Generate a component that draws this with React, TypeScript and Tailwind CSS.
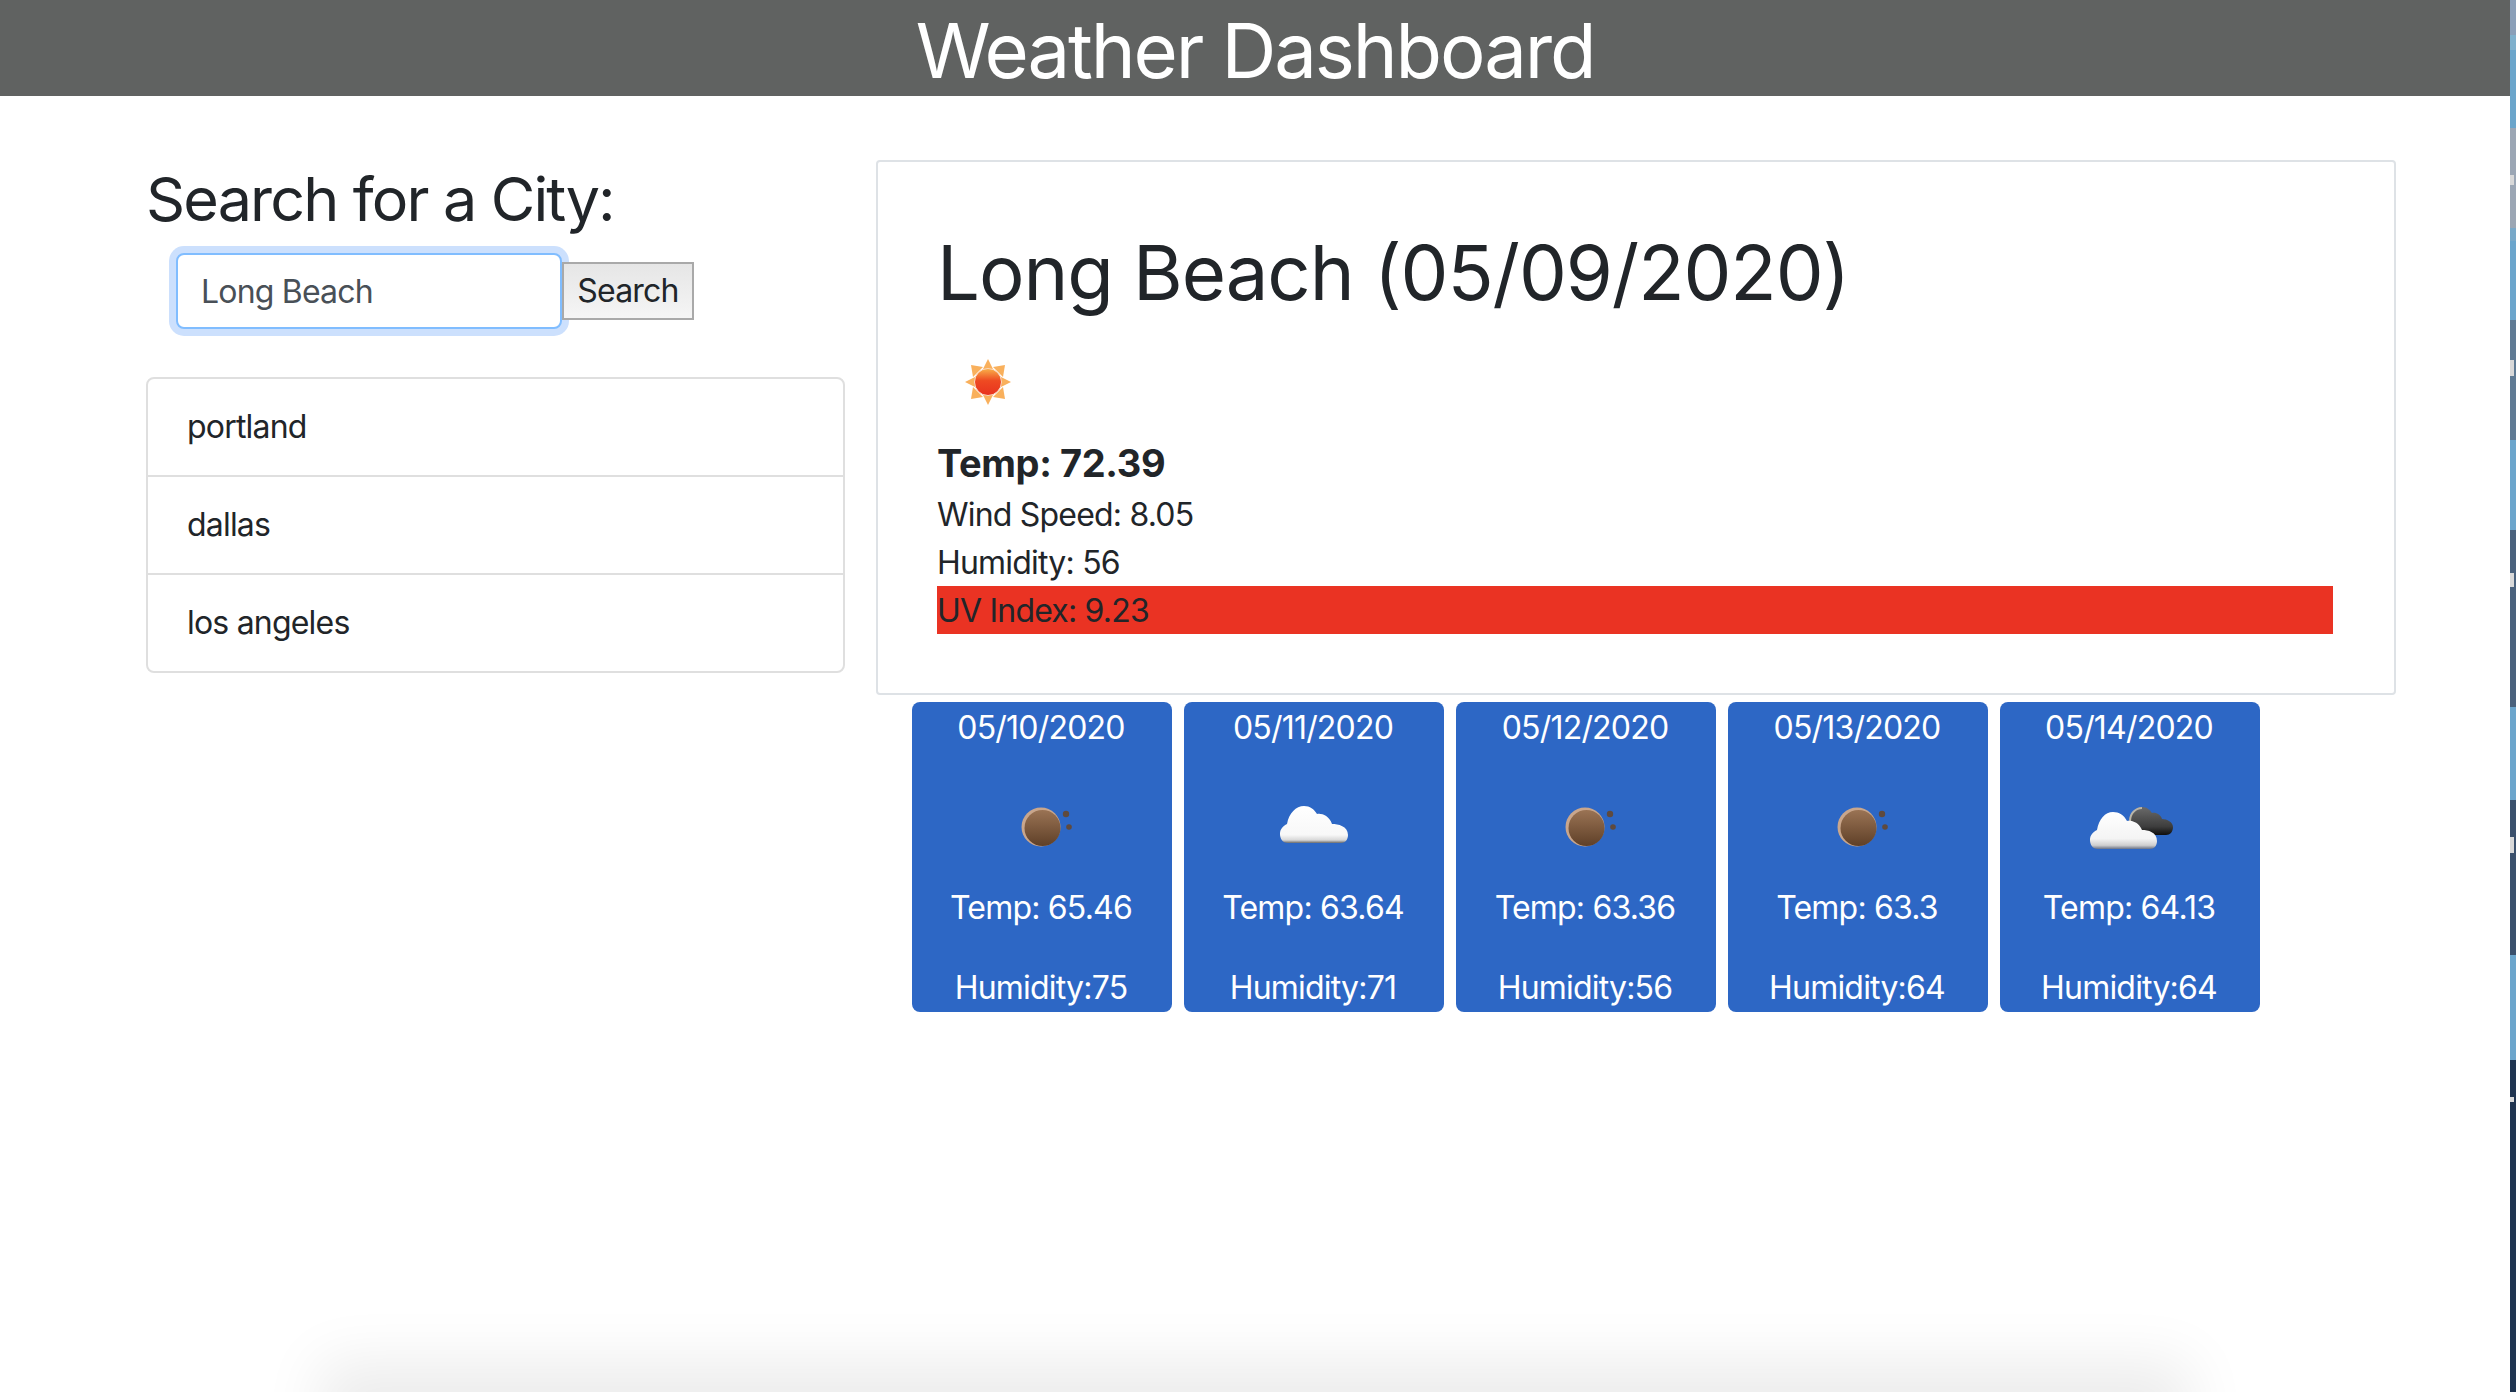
import { useId } from "react";

const forecast = [
	{ date: "05/10/2020", temp: "65.46", humidity: "75", icon: "haze" },
	{ date: "05/11/2020", temp: "63.64", humidity: "71", icon: "cloud" },
	{ date: "05/12/2020", temp: "63.36", humidity: "56", icon: "haze" },
	{ date: "05/13/2020", temp: "63.3", humidity: "64", icon: "haze" },
	{ date: "05/14/2020", temp: "64.13", humidity: "64", icon: "clouds" },
];

const cities = ["portland", "dallas", "los angeles"];

// sliver of the desktop wallpaper visible right of the browser window
const stripe = [
	{ h: "h-[35px]", bg: "bg-[#8a9fb8]", mark: "" },
	{ h: "h-[15px]", bg: "bg-[#7fb0cc]", mark: "" },
	{ h: "h-[78px]", bg: "bg-[#6aa5cb]", mark: "" },
	{ h: "h-[100px]", bg: "bg-[#9ba6b4]", mark: "mt-[47px] h-[10px] w-[4px] bg-[#d8d8d8]" },
	{ h: "h-[13px]", bg: "bg-[#78a8c8]", mark: "" },
	{ h: "h-[79px]", bg: "bg-[#6ba5cc]", mark: "" },
	{ h: "h-[120px]", bg: "bg-[#5f7a93]", mark: "mt-[40px] h-[16px] w-[4px] bg-[#d8d8d8]" },
	{ h: "h-[90px]", bg: "bg-[#6ba5cc]", mark: "" },
	{ h: "h-[177px]", bg: "bg-[#4a617c]", mark: "mt-[43px] h-[14px] w-[4px] bg-[#d8d8d8]" },
	{ h: "h-[93px]", bg: "bg-[#6ba5cc]", mark: "" },
	{ h: "h-[155px]", bg: "bg-[#3a506c]", mark: "mt-[37px] h-[16px] w-[4px] bg-[#d8d8d8]" },
	{ h: "h-[105px]", bg: "bg-[#6ba5cc]", mark: "" },
	{ h: "h-[332px]", bg: "bg-[#1f3450]", mark: "mt-[37px] h-[5px] w-[4px] bg-[#d8d8d8]" },
];

const SunIcon = () => {
	const id = useId();
	return (
		<svg width="100" height="100" viewBox="0 0 100 100" className="blur-[0.5px]">
			<defs>
				<linearGradient id={id} x1="0" y1="0" x2="0" y2="1">
					<stop offset="0" stopColor="#f9b24a" />
					<stop offset="0.45" stopColor="#ee4a22" />
					<stop offset="1" stopColor="#e8321f" />
				</linearGradient>
			</defs>
			<g fill="#f9b05c">
				<path d="M50 27l-5 10h10z" />
				<path d="M50 73l-5-10h10z" />
				<path d="M27 50l10-5v10z" />
				<path d="M73 50l-10-5v10z" />
				<path d="M33 33l12 2-10 10z" />
				<path d="M67 33l-12 2 10 10z" />
				<path d="M33 67l12-2-10-10z" />
				<path d="M67 67l-12-2 10-10z" />
			</g>
			<circle cx="50" cy="50" r="13.5" fill={`url(#${id})`} stroke="#fbd9c0" strokeWidth="1" />
		</svg>
	);
};

const HazeIcon = () => {
	const id = useId();
	return (
		<svg width="100" height="100" viewBox="0 0 100 100" className="blur-[0.4px]">
			<defs>
				<linearGradient id={id} x1="0" y1="0" x2="0" y2="1">
					<stop offset="0" stopColor="#9a7354" />
					<stop offset="1" stopColor="#5f4028" />
				</linearGradient>
			</defs>
			<circle cx="49" cy="50" r="19.5" fill="#c9a68c" />
			<circle cx="50.5" cy="51" r="18" fill={`url(#${id})`} />
			<circle cx="74" cy="37" r="3.2" fill="#5f4a3e" />
			<circle cx="77" cy="50" r="2.8" fill="#5f4a3e" />
		</svg>
	);
};

const CloudIcon = () => {
	const id = useId();
	return (
		<svg width="100" height="100" viewBox="0 0 100 100" className="blur-[0.5px]">
			<defs>
				<linearGradient id={id} x1="0" y1="0" x2="0" y2="1">
					<stop offset="0" stopColor="#ffffff" />
					<stop offset="0.78" stopColor="#f8f8f8" />
					<stop offset="0.92" stopColor="#d8d8d8" />
					<stop offset="1" stopColor="#6b6b6b" />
				</linearGradient>
			</defs>
			<path
				d="M24 66C18 66 16 61 16 57C16 52 19 49 23 47C25 36 32 29 40 29C46 29 50 32 53 37C57 36 65 38 68 47C74 47 84 49 84 58C84 63 81 66 77 66Z"
				fill={`url(#${id})`}
			/>
		</svg>
	);
};

const CloudsIcon = () => {
	const white = useId();
	const dark = useId();
	return (
		<svg width="100" height="100" viewBox="0 0 100 100" className="blur-[0.5px]">
			<defs>
				<linearGradient id={white} x1="0" y1="0" x2="0" y2="1">
					<stop offset="0" stopColor="#ffffff" />
					<stop offset="0.72" stopColor="#f4f4f4" />
					<stop offset="0.9" stopColor="#cfcfcf" />
					<stop offset="1" stopColor="#6a7285" />
				</linearGradient>
				<linearGradient id={dark} x1="0" y1="0" x2="0" y2="1">
					<stop offset="0" stopColor="#6a6a6a" />
					<stop offset="0.7" stopColor="#3d3d3d" />
					<stop offset="1" stopColor="#0e0e0e" />
				</linearGradient>
			</defs>
			<path
				d="M50 45C50 36 56 30 62 30C67 30 70 33 72 36C76 35 81 38 82 42C87 42 93 45 93 50C93 55 90 58 86 58H60Z"
				fill={`url(#${dark})`}
			/>
			<path d="M50 44C50 36 56 31 62 31" fill="none" stroke="#b9b4a8" strokeWidth="2" />
			<path
				d="M18 72C12 72 10 67 10 63C10 58 13 55 17 53C19 42 25 35 33 35C39 35 44 38 47 44C51 43 59 45 62 53C68 53 77 55 77 64C77 69 74 72 70 72Z"
				fill={`url(#${white})`}
			/>
		</svg>
	);
};

const icons: Record<string, () => React.JSX.Element> = {
	haze: HazeIcon,
	cloud: CloudIcon,
	clouds: CloudsIcon,
};

const ForecastCard = ({
	date,
	temp,
	humidity,
	icon,
}: {
	date: string;
	temp: string;
	humidity: string;
	icon: string;
}) => {
	const Icon = icons[icon];
	return (
		<div className="w-[260px] h-[310px] rounded-lg bg-[#2d67c5] text-white text-center flex flex-col">
			<p className="h-12 pr-[2px] leading-[52px]">{date}</p>
			<div className="h-[132px] pt-[22px] flex items-center justify-center">
				<Icon />
			</div>
			<p className="h-12 pr-[2px] leading-[52px]">Temp: {temp}</p>
			<p className="h-12 pr-[2px] leading-[52px] mt-8">Humidity:{humidity}</p>
		</div>
	);
};

export default function App() {
	return (
		<div className="relative flex h-[1392px] w-[2516px] overflow-hidden bg-white font-['Inter','Liberation_Sans',sans-serif] text-[32px] tracking-[-0.025em] text-[#212529]">
			<div className="w-[2510px] shrink-0">
				<header className="h-24 bg-[#606261] text-center text-[76px] leading-[100px] tracking-[-0.028em] text-white">
					Weather Dashboard
				</header>
				<main className="flex pt-16">
					<section className="ml-[146px] w-[699px] shrink-0">
						<h2 className="h-[77px] text-[61px] leading-[79px] tracking-[-0.03em]">Search for a City:</h2>
						<div className="mt-4 ml-[30px] flex items-center">
							<input
								readOnly
								value="Long Beach"
								className="h-[76px] w-[386px] rounded-lg border-2 border-[#80bdff] bg-white px-[23px] text-[#495057] shadow-[0_0_0_7px_#cce0fd] outline-none"
							/>
							<button className="h-[58px] w-[132px] border-2 border-[#a9a9a9] bg-gradient-to-b from-[#e6e6e6] to-[#f5f5f5] text-center">
								Search
							</button>
						</div>
						<ul className="mt-12 rounded-lg border-2 border-[#dfdfdf]">
							{cities.map((city, i) => (
								<li
									key={city}
									className={`h-24 px-[39px] leading-[96px] ${i > 0 ? "border-t-2 border-[#dfdfdf] box-content" : ""}`}
								>
									{city}
								</li>
							))}
						</ul>
					</section>
					<section className="ml-[31px] w-[1520px]">
						<div className="h-[535px] rounded border-2 border-[#dee2e6] pl-[59px] pr-[61px] pt-[62px]">
							<h1 className="text-[76px] leading-[96px] tracking-[-0.014em]">Long Beach (05/09/2020)</h1>
							<div className="mt-3 h-[100px] pl-px">
								<SunIcon />
							</div>
							<p className="mt-1 text-[38px] font-bold leading-[54px] tracking-[-0.01em]">Temp: 72.39</p>
							<p className="h-12 leading-[50px]">Wind Speed: 8.05</p>
							<p className="h-12 leading-[50px]">Humidity: 56</p>
							<p className="h-12 bg-[#ea3323] leading-[50px]">UV Index: 9.23</p>
						</div>
						<div className="ml-[36px] mt-[7px] flex gap-3">
							{forecast.map((day) => (
								<ForecastCard key={day.date} {...day} />
							))}
						</div>
					</section>
				</main>
			</div>
			<div className="w-[6px] shrink-0">
				{stripe.map((s, i) => (
					<div key={i} className={`${s.h} ${s.bg} overflow-hidden`}>
						{s.mark && <div className={s.mark} />}
					</div>
				))}
			</div>
			<div className="absolute left-[350px] top-[1392px] h-10 w-[1810px] bg-[#ddd] shadow-[0_0_60px_30px_rgba(0,0,0,0.08)]" />
		</div>
	);
}
